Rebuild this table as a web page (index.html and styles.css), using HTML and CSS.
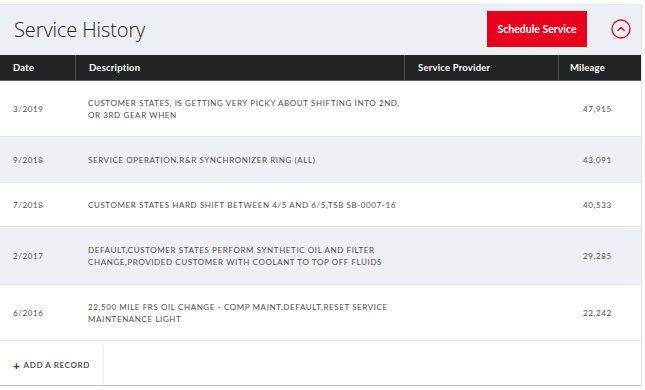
FILE: index.html
```html
<!DOCTYPE html>
<html>
<head>
<meta charset="utf-8">
<link rel="stylesheet" href="styles.css">
</head>
<body>
<div class="card">
  <div class="top">
    <h1 class="title">Service History</h1>
    <div class="actions">
      <button class="btn">Schedule Service</button>
      <span class="toggle">
        <svg width="20" height="20" viewBox="0 0 20 20"><circle cx="10" cy="10" r="9" fill="none" stroke="#e2001a" stroke-width="1.3"/><path d="M6.8 11.6 L10 8.4 L13.2 11.6" fill="none" stroke="#e2001a" stroke-width="1.4" stroke-linecap="round" stroke-linejoin="round"/></svg>
      </span>
    </div>
  </div>
  <div class="thead">
    <div class="th">Date</div>
    <div class="th">Description</div>
    <div class="th">Service Provider</div>
    <div class="th">Mileage</div>
  </div>
  <div class="row">
    <div class="td">3/2019</div>
    <div class="td desc">CUSTOMER STATES, IS GETTING VERY PICKY ABOUT SHIFTING INTO 2ND,<br>OR 3RD GEAR WHEN</div>
    <div class="td"></div>
    <div class="td num">47,915</div>
  </div>
  <div class="row alt">
    <div class="td">9/2018</div>
    <div class="td desc">SERVICE OPERATION,R&amp;R SYNCHRONIZER RING (ALL)</div>
    <div class="td"></div>
    <div class="td num">43,091</div>
  </div>
  <div class="row">
    <div class="td">7/2018</div>
    <div class="td desc">CUSTOMER STATES HARD SHIFT BETWEEN 4/5 AND 6/5,TSB SB-0007-16</div>
    <div class="td"></div>
    <div class="td num">40,533</div>
  </div>
  <div class="row alt">
    <div class="td">2/2017</div>
    <div class="td desc">DEFAULT,CUSTOMER STATES PERFORM SYNTHETIC OIL AND FILTER<br>CHANGE,PROVIDED CUSTOMER WITH COOLANT TO TOP OFF FLUIDS</div>
    <div class="td"></div>
    <div class="td num">29,285</div>
  </div>
  <div class="row">
    <div class="td">6/2016</div>
    <div class="td desc">22,500 MILE FRS OIL CHANGE - COMP MAINT,DEFAULT,RESET SERVICE<br>MAINTENANCE LIGHT</div>
    <div class="td"></div>
    <div class="td num">22,242</div>
  </div>
  <div class="foot">
    <div class="add"><span class="plus">+</span>ADD A RECORD</div>
  </div>
</div>
</body>
</html>
```

FILE: styles.css
```css
html, body {
  margin: 0;
  padding: 0;
  background: #ffffff;
}
body {
  padding-top: 4px;
  font-family: "Lato", "Open Sans", sans-serif;
}
.card {
  width: 641px;
  border-right: 1px solid #e3e5e8;
  border-bottom: 1px solid #bfc2c6;
  background: #fff;
}
.top {
  height: 51px;
  background: #eceff3;
  display: flex;
  align-items: center;
  justify-content: space-between;
  padding: 0 10px 0 14px;
}
.title {
  margin: 0;
  font-family: "Open Sans", sans-serif;
  font-weight: 300;
  font-size: 20px;
  color: #222;
  letter-spacing: -0.1px;
  padding-bottom: 1px;
}
.actions {
  display: flex;
  align-items: center;
  gap: 24px;
  margin-top: -1px;
}
.btn {
  width: 100px;
  height: 36px;
  border: none;
  background: #e8001c;
  color: #fff;
  font-family: "Lato", sans-serif;
  font-weight: 700;
  font-size: 10.5px;
  padding: 0;
}
.toggle {
  display: flex;
  width: 20px;
  height: 20px;
}
.thead {
  display: grid;
  grid-template-columns: 75px 329px 154px 1fr;
  height: 25px;
  background: #222324;
  border-bottom: 1px solid #5a5c5e;
}
.th {
  color: #fff;
  font-family: "Lato", sans-serif;
  font-weight: 700;
  font-size: 9.5px;
  letter-spacing: 0.2px;
  padding-left: 13px;
  display: flex;
  align-items: center;
  border-left: 1px solid #4a4c4e;
}
.th:first-child {
  border-left: none;
}
.th:last-child {
  padding-left: 11px;
}
.row {
  display: grid;
  grid-template-columns: 75px 329px 154px 1fr;
  align-items: center;
  padding: 16px 0 15px;
  border-bottom: 1px solid #e6e9ed;
}
.row.alt {
  background: #edf0f4;
  padding: 17px 0 16px;
}
.td {
  font-family: "Lato", sans-serif;
  font-size: 8px;
  line-height: 12px;
  letter-spacing: 0.6px;
  color: #505050;
  padding-left: 13px;
  white-space: nowrap;
}
.td.num {
  padding-left: 25px;
}
.foot {
  height: 44px;
  display: flex;
}
.add {
  width: 90px;
  padding-left: 13px;
  border-right: 1px solid #eeeeee;
  display: flex;
  align-items: center;
  font-family: "Lato", sans-serif;
  font-weight: 700;
  font-size: 8px;
  letter-spacing: 0.6px;
  color: #555;
  margin: 4px 0 0;
}
.plus {
  font-size: 12px;
  font-weight: 900;
  margin-right: 3px;
  color: #444;
}
```
